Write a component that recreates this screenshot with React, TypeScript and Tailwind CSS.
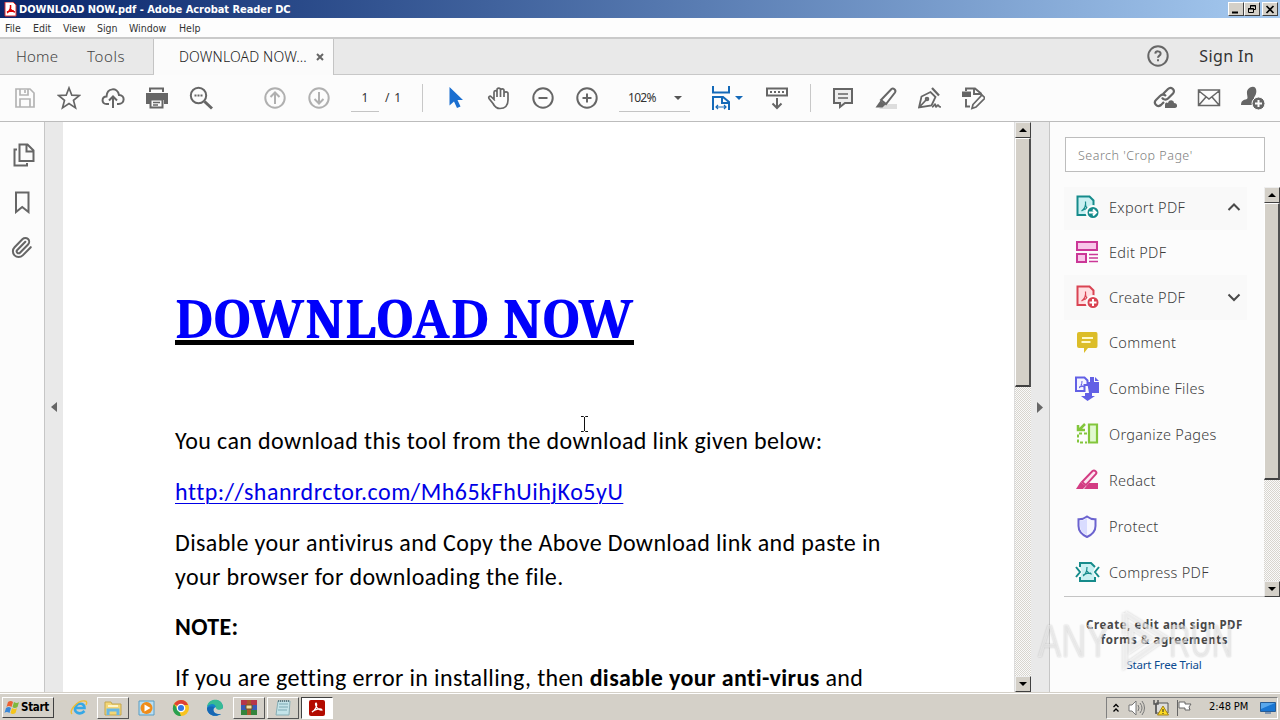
import type { ReactNode } from 'react';
import { Paperclip } from 'lucide-react';

type IconProps = { children: ReactNode; size?: number; className?: string };

function Icon({ children, size = 24, className = '' }: IconProps) {
    return (
        <svg
            width={size}
            height={size}
            viewBox={`0 0 ${size} ${size}`}
            fill="none"
            stroke="currentColor"
            strokeWidth="2"
            className={`shrink-0 ${className}`}
        >
            {children}
        </svg>
    );
}

const PdfMark = () => (
    <path d="M6.5 16c3-2 4.5-6 4-9.500M10.500 9c0 3 2 5 5 5M7 15.500c2-1.500 5-2.200 8-1.700" strokeWidth="1.200" />
);

/* ---------- Title bar ---------- */

function WindowButton({ children }: { children: ReactNode }) {
    return (
        <div className="w-4 h-[14px] bg-[#d4d0c8] border border-t-white border-l-white border-r-[#404040] border-b-[#404040] flex items-center justify-center">
            <svg width="12" height="11" viewBox="0 0 12 11" fill="none" stroke="black" className="shrink-0">
                {children}
            </svg>
        </div>
    );
}

function TitleBar() {
    return (
        <div className="h-[18px] flex items-center bg-linear-to-r from-[#0a246a] to-[#a6caf0] pl-[4px] pr-[2px]">
            <svg width="13" height="15" viewBox="0 0 13 15" className="mr-[2px]">
                <path d="M1 0h8l3 3v11H1z" fill="#fff" stroke="#d33" />
                <path d="M3 11c3-2 4-5 3.500-8M6 6c1 3 2 3 5 4M3 10c2-1 4-1 7-1" fill="none" stroke="#d00" strokeWidth="1.500" />
            </svg>
            <span className="text-white font-bold text-[11px] leading-[16px] pt-px tracking-[-0.050px] font-['DejaVu_Sans_Condensed','DejaVu_Sans',sans-serif] [font-stretch:condensed]">
                DOWNLOAD NOW.pdf - Adobe Acrobat Reader DC
            </span>
            <div className="ml-auto flex">
                <WindowButton><path d="M2 8.500h6" strokeWidth="2" /></WindowButton>
                <WindowButton>
                    <path d="M4.500 4V1.500h5v4H8M4 2h6" />
                    <path d="M2.500 4.500h5v4h-5zM2 5h6" />
                </WindowButton>
                <div className="w-[2px]" />
                <WindowButton><path d="M2.500 2l7 7M9.500 2l-7 7" strokeWidth="1.700" /></WindowButton>
            </div>
        </div>
    );
}

function MenuBar() {
    return (
        <div className="h-[19px] bg-[#fdfdfd] flex items-center gap-[12px] pl-[5px] text-[10.5px] leading-[18px] text-[#333] font-['DejaVu_Sans_Condensed','DejaVu_Sans',sans-serif] [font-stretch:condensed]">
            <span className="w-[17px]">File</span>
            <span className="w-[18px] ml-[-1px]">Edit</span>
            <span className="w-[22px]">View</span>
            <span className="w-[20px]">Sign</span>
            <span className="w-[38px]">Window</span>
            <span>Help</span>
        </div>
    );
}

function TabBar() {
    return (
        <div className="h-[38px] flex bg-[#e9e9e9] border-t-2 border-t-[#cacaca] border-b border-b-[#c8c8c8] text-[15px] text-[#444] font-['Noto_Sans',sans-serif] font-light">
            <div className="w-[154px] flex items-center border-r border-[#c4c4c4] pl-[16px]">
                <span className="w-[71px] tracking-[0.2px]">Home</span>
                <span className="tracking-[0.6px]">Tools</span>
            </div>
            <div className="w-[180px] h-[36px] flex items-center bg-[#fbfbfb] border-r border-[#c4c4c4] pl-[25px] pr-[9px] pb-px text-[14px] text-[#222]">
                <span className="tracking-[0.13px] whitespace-nowrap">DOWNLOAD NOW...</span>
                <svg width="8" height="8" viewBox="0 0 8 8" stroke="#666" strokeWidth="2" className="ml-auto">
                    <path d="M1 1l6 6M7 1L1 7" />
                </svg>
            </div>
            <div className="ml-auto flex items-center pr-[26px] pb-px">
                <Icon className="text-[#666] mr-[29px]">
                    <circle cx="12" cy="12" r="9.700" />
                    <path d="M9.300 9.700c.3-3.200 5.400-3 5.300 0 0 1.900-2.600 1.900-2.600 4" />
                    <path d="M12 15.300v2" />
                </Icon>
                <span className="text-[16px] text-[#333] font-normal tracking-[0.37px]">Sign In</span>
            </div>
        </div>
    );
}

/* ---------- Toolbar ---------- */

function Tool({ children, className = '' }: { children: ReactNode; className?: string }) {
    return <div className={`w-11 flex items-center justify-center ${className}`}><Icon>{children}</Icon></div>;
}

function Toolbar() {
    return (
        <div className="h-[47px] bg-[#fcfcfc] border-b border-[#bcbcbc] flex items-center text-[#666] pl-[3px] pr-[5px] font-['Noto_Sans',sans-serif] text-[12px]">
            <Tool className="text-[#b4b4b4]">
                <path d="M3 3h14l4 4v14H3zM7 3v6h8V3M7 21v-8h10v8M12 4v3" strokeWidth="1.700" />
            </Tool>
            <Tool>
                <path d="M12 2l2.800 7.200 7.700.3-6 4.900 2 7.500-6.500-4.300L5.500 21.900l2-7.500-6-4.900 7.700-.3z" strokeWidth="1.700" />
            </Tool>
            <Tool>
                <path d="M8 18H5.500C0 18 .5 10.500 5.500 10.500 6 1.500 16.500 1 18 9c6.500 0 6 9-.5 9H16" />
                <path d="M12 22V11M8 14.500l4-4 4 4" />
            </Tool>
            <Tool>
                <path d="M5 6V2.500h13V6" />
                <path d="M1 7h22v11h-4v-4H5v4H1z" fill="currentColor" stroke="none" />
                <path d="M5.500 13.500h12v8h-12z" fill="#fcfcfc" />
                <path d="M8 16.500h7M8 19h5" strokeWidth="1.300" />
            </Tool>
            <Tool>
                <circle cx="9.500" cy="9.500" r="7.700" />
                <path d="M15.500 15.500l7.500 7" strokeWidth="3" />
                <path d="M5.500 9.500h2m1 0h2m1 0h2" />
            </Tool>
            <Tool className="ml-[30px] text-[#b0b0b0]">
                <circle cx="12" cy="12" r="9.700" /><path d="M12 18V7M7.500 11L12 6.500l4.500 4.500" />
            </Tool>
            <Tool className="text-[#b0b0b0]">
                <circle cx="12" cy="12" r="9.700" /><path d="M12 6v11M7.500 13l4.500 4.500 4.500-4.500" />
            </Tool>
            <div className="ml-[10px] w-7 h-[27px] border-b border-[#c4c4c4] text-center text-[#333] leading-[26px] mt-[1px]">1</div>
            <span className="ml-[6px] w-[20px] text-[#333] whitespace-pre tracking-[0.800px]">/ 1</span>
            <div className="ml-[17px] w-px h-7 bg-[#c8c8c8]" />
            <Tool className="ml-[11px] text-[#1b6fd0]">
                <path d="M5.500 1v18.500l4.500-4 3 6.500 3.500-1.500-3-6.500h5.500z" fill="currentColor" stroke="none" />
            </Tool>
            <Tool className="ml-[-1px]">
                <path d="M7 14V6.200c0-2.200 3-2.200 3 0V11M10 10V3.700c0-2.200 3.500-2.200 3.500 0V11M13.500 10V4.500c0-2.200 3.500-2.200 3.500 0V11M17 10V7.500c0-2.200 4-2.200 4 0V14c0 6-3 8.500-8 8.500-4 0-5.500-2-7-5L2 12.500c-1-2 1-3 2.500-1.500L8 14.500" strokeWidth="1.700" />
            </Tool>
            <Tool><circle cx="12" cy="12" r="9.700" /><path d="M7.500 12h9" /></Tool>
            <Tool><circle cx="12" cy="12" r="9.700" /><path d="M7.500 12h9M12 7.500v9" /></Tool>
            <div className="ml-[10px] w-[71px] h-[27px] mt-[1px] border-b border-[#c4c4c4] flex items-center pl-[9px] pr-[8px] text-[#333]">
                <span className="tracking-[-0.7px]">102%</span>
                <svg width="8" height="4" viewBox="0 0 8 4" fill="#555" className="ml-auto"><path d="M0 0h8L4 4z" /></svg>
            </div>
            <div className="ml-[19px] flex items-center text-[#1469b8]">
                <Icon>
                    <path d="M4 0v6.500h16V0M4 24V11h10l6 5v8M13 11v6h7" />
                    <path d="M7 21h10M9 19l-2 2 2 2M15 19l2 2-2 2" strokeWidth="1.200" />
                </Icon>
                <svg width="8" height="4" viewBox="0 0 8 4" fill="currentColor" className="ml-[2px]"><path d="M0 0h8L4 4z" /></svg>
            </div>
            <Tool className="ml-[12px]">
                <path d="M2 2.500h20v7H2zM5 6h2m2 0h2m2 0h2m2 0h2" />
                <path d="M12 12v10M7.500 17.500L12 22l4.500-4.500" />
            </Tool>
            <div className="ml-[11px] w-px h-7 bg-[#c8c8c8]" />
            <Tool className="ml-[10px]">
                <path d="M3 3h18v14h-7l-5 4v-4H3z" fill="#eee" />
                <path d="M7 8h10M7 12h10" strokeWidth="1.300" />
            </Tool>
            <Tool className="ml-[-1px]">
                <path d="M9 18h14v5H5z" fill="#ddd" stroke="none" />
                <path d="M7 14L17.500 3c1.700-1.500 5 1 3.500 3.500L12 18z" strokeWidth="2" />
                <path d="M6.500 14.500l5 4-3 3H1.500z" fill="currentColor" stroke="none" />
            </Tool>
            <Tool>
                <path d="M14 2l7 7.500" strokeWidth="2.200" />
                <path d="M1 21.500L3.500 10.500l9-4.500 5 5-4 8.500zL8.500 13.500" strokeWidth="1.800" />
                <circle cx="9" cy="13" r="1.300" />
                <path d="M14 21c2 0 2-3 3-3s0 3 1 3 1-2 2-2 0 2 3 2" strokeWidth="1.700" />
            </Tool>
            <Tool className="ml-[-1px]">
                <path d="M5 5V2.500h9l6 5v2M13 2v6h6M5 13v7.500h4" strokeWidth="1.900" />
                <path d="M1 5.500h9V11H1z" fill="currentColor" stroke="none" />
                <path d="M12 18.500L21 9l3 3-9 9-4 1.500z" strokeWidth="1.700" />
            </Tool>
            <div className="flex-1" />
            <Tool>
                <path d="M10 8l5-5c3-3 8 1 5 4.500l-5 5c-2 2-5 1-6-1M13 10c-2-2-4-2-6 0l-4 4c-3 3 1 8 5 5l3-3" strokeWidth="2.200" />
                <path d="M12 22v-3c0-3 2-3 3-2 1-4 6-3 6 0 4 0 4 5 1 5z" fill="currentColor" stroke="none" />
            </Tool>
            <Tool>
                <path d="M1.500 4h21v15.500h-21zM2 5l10 8 10-8M2 19l7-8M22 19l-7-8" strokeWidth="1.500" />
            </Tool>
            <Tool>
                <path d="M9 1.500c7-3 8 5 4 10 0 2 1 2 3 3l-2 4.500H0c0-4 2-5 6-6 2-2-3-8 3-11.500z" fill="currentColor" stroke="none" />
                <circle cx="17.500" cy="17.500" r="6.500" fill="currentColor" stroke="#fcfcfc" strokeWidth="1" />
                <path d="M17.500 14v7M14 17.500h7" stroke="#fcfcfc" />
            </Tool>
        </div>
    );
}

/* ---------- Document area ---------- */

function NavPane() {
    return (
        <div className="w-[45px] bg-[#fcfcfc] border-r border-[#c6c6c6] flex flex-col items-center pt-[21px] gap-[23px] text-[#666]">
            <Icon className="ml-[3px]">
                <path d="M7.500 1.500h8l6 6v10.500h-14zM14.500 2v6.500h6.500M5 6.500H2.500v16H15V20" />
            </Icon>
            <Icon><path d="M6 2.500h12.500v19.500l-6.300-5L6 22z" /></Icon>
            <Paperclip size={23} strokeWidth={2.1} className="mt-[-1px] ml-[-2px]" />
        </div>
    );
}

function ScrollArrow({ up = false }: { up?: boolean }) {
    return (
        <div className="w-full h-4 shrink-0 bg-[#d4d0c8] border border-t-[#eee] border-l-[#eee] border-r-[#404040] border-b-[#404040] flex items-center justify-center">
            <svg width="8" height="4" viewBox="0 0 8 4" fill="#000" className="mr-px">
                <path d={up ? 'M0 4h8L4 0z' : 'M0 0h8L4 4z'} />
            </svg>
        </div>
    );
}

const trackBg = 'bg-[#eae8e3] bg-[repeating-conic-gradient(#d8d5ce_0_25%,#fafafa_0_50%)] bg-[length:2px_2px]';

function PageText() {
    return (
        <div className="flex-1 bg-white overflow-hidden pl-[112px] text-black font-['Carlito','Lato',sans-serif] text-[24px] leading-[34px] tracking-[0.37px] whitespace-nowrap">
            <h1 className="mt-[167px] h-[56px] w-[459px] border-b-[5px] border-black text-[#0000fb] font-bold text-[57px] leading-[62px] tracking-[0.9px] font-['Cambria','Caladea','Liberation_Serif',serif]">
                DOWNLOAD NOW
            </h1>
            <p className="mt-[79px]">You can download this tool from the download link given below:</p>
            <p className="mt-[17px] text-[#0000e6] tracking-[0.52px]"><span className="underline decoration-1 underline-offset-[3px]">http://shanrdrctor.com/Mh65kFhUihjKo5yU</span></p>
            <p className="mt-[17px]">
                Disable your antivirus and Copy the Above Download link and paste in<br />
                your browser for downloading the file.
            </p>
            <p className="mt-[16px] font-bold">NOTE:</p>
            <p className="mt-[17px]">If you are getting error in installing, then <b>disable your anti-virus</b> and</p>
        </div>
    );
}

function DocumentArea() {
    return (
        <div className="flex-1 flex relative min-w-0">
            <div className="w-[18px] bg-[#e9e9e9] flex items-center justify-center">
                <svg width="6" height="10" viewBox="0 0 6 10" fill="#666"><path d="M6 0v10L0 5z" /></svg>
            </div>
            <PageText />
            <div className={`w-[17px] flex flex-col border-l border-[#ddd] ${trackBg}`}>
                <ScrollArrow up />
                <div className="h-[249px] bg-[#d4d0c8] border border-t-white border-l-white border-r-2 border-r-[#505050] border-b-2 border-b-[#404040]" />
                <div className="flex-1" />
                <ScrollArrow />
            </div>
            <div className="w-[18px] bg-[#e9e9e9] flex items-center justify-center">
                <svg width="6" height="11" viewBox="0 0 6 11" fill="#666"><path d="M0 0v11l6-5.500z" /></svg>
            </div>
            {/* Text cursor */}
            <svg width="9" height="16" viewBox="0 0 9 16" fill="none" stroke="#111" className="absolute left-[535px] top-[294px]">
                <path d="M1 .5h2.500l1 1 1-1H8M4.500 1v14M1 15.500h2.500l1-1 1 1H8" />
            </svg>
        </div>
    );
}

/* ---------- Tools pane ---------- */

const tools = [
    {
        label: 'Export PDF', chevron: 'M1.500 7L7 1.500 12.500 7', shaded: true,
        icon: (
            <g stroke="#168b8b">
                <path d="M2.500 1.500h12l4 4V20h-16z" fill="#c9f0f2" /><PdfMark />
                <circle cx="18" cy="17.500" r="6.500" fill="#168b8b" stroke="#fbfbfb" />
                <path d="M14 17.500h6M18 14.500l3 3-3 3" stroke="white" />
            </g>
        ),
    },
    {
        label: 'Edit PDF',
        icon: (
            <g stroke="#cb3797">
                <path d="M2 2h20v8H2zM2 14h9v8H2z" fill="#f9c6e9" />
                <path d="M14 14.500h9M14 18h9M14 21.500h9" strokeWidth="1.400" />
            </g>
        ),
    },
    {
        label: 'Create PDF', chevron: 'M1.500 1.500L7 7l5.500-5.500', shaded: true,
        icon: (
            <g stroke="#d94453">
                <path d="M2.500 1.500h12l4 4V20h-16z" fill="#ffdfe2" /><PdfMark />
                <circle cx="18" cy="17.500" r="6.500" fill="#d94453" stroke="#fbfbfb" />
                <path d="M14.500 17.500h7M18 14v7" stroke="white" />
            </g>
        ),
    },
    {
        label: 'Comment',
        icon: (
            <g>
                <path d="M4 2h17q1.500 0 1.500 2v12q0 2-1.500 2H13l-4 5v-5H4q-2 0-2-2V4q0-2 2-2z" fill="#dcbd29" stroke="none" />
                <path d="M7 8h11M6.500 12h9" stroke="#fff9c9" />
            </g>
        ),
    },
    {
        label: 'Combine Files',
        icon: (
            <g stroke="#6260e5">
                <path d="M12 6h3V1h4v5h5v11h-7v3h3l-7.500 5L6 20h4v-3h4z" fill="#6260e5" stroke="none" />
                <path d="M1 1.500h8.500l3 3V9h-3v6H1z" fill="#f5f5ff" />
                <path d="M4 12c2-1 3-4 3-7M6 8c1 2 2 3 4 3M4 11l6-1" strokeWidth="1" />
                <path d="M20 1l4 4h-4z" fill="#6260e5" stroke="none" />
            </g>
        ),
    },
    {
        label: 'Organize Pages',
        icon: (
            <g stroke="#83c63c">
                <path d="M14 2.500h8v18h-8z" fill="#e1f9d0" strokeWidth="2.200" />
                <path d="M12 11.500H3v9h9" strokeDasharray="3 2" />
                <path d="M10 2L4 8M3 3v5h7" strokeWidth="2.500" />
            </g>
        ),
    },
    {
        label: 'Redact',
        icon: (
            <g stroke="#d33c83">
                <path d="M14 15h9v6H9z" fill="#d33c83" stroke="none" />
                <path d="M7 14L17.500 3c2-1.500 5 1 3.500 3L11 17z" fill="#fde4f0" strokeWidth="1.900" />
                <path d="M5.500 14l5.500 4-3 3H1z" fill="#d33c83" stroke="none" />
            </g>
        ),
    },
    {
        label: 'Protect',
        icon: (
            <g stroke="#6b63cf">
                <path d="M12 2.500q4 3 8.500 2.800V12q0 7-8.500 11-8.500-4-8.500-11V5.300Q8 5.500 12 2.500z" fill="#f6f6ff" />
                <path d="M12 4v17q-7-3-7-9V7q4 0 7-3z" fill="#d9dcff" stroke="none" />
            </g>
        ),
    },
    {
        label: 'Compress PDF',
        icon: (
            <g stroke="#168b8b">
                <path d="M5 3h11l4 4-2 5 2 5v4H5v-4l2-5-2-5z" fill="#c9f0f2" stroke="none" />
                <path d="M5 7V3h11l4 4M5 17v4h15v-4M1 7l4 5-4 5M24 7l-4 5 4 5" />
                <path d="M8 16c3-2 4-5 4-9M12 11c1 2 2 3 5 3M8 15c2-1 5-2 8-2" strokeWidth="1.200" />
            </g>
        ),
    },
];

function ToolsPane() {
    return (
        <div className="w-[231px] shrink-0 bg-[#fcfcfc] border-l border-[#c6c6c6] flex flex-col relative font-['Noto_Sans',sans-serif]">
            <div className="ml-[15px] mt-[15px] w-[200px] h-[35px] bg-white border border-[#bdbdbd] pl-[12px] text-[12.5px] leading-[35px] tracking-[0.5px] text-[#808080] font-light">
                Search 'Crop Page'
            </div>
            <div className="mt-[15px] h-[410px] flex">
                <div className="flex-1 ml-[14px] overflow-hidden border-b border-[#c4c4c4]">
                    {tools.map((tool, i) => (
                        <div
                            key={tool.label}
                            className={`${i < 4 ? 'h-[45px]' : 'h-[46px]'} ${i === 0 ? 'mt-[-2px]' : ''} ${i > 3 ? 'pt-px' : ''} w-[183px] flex items-center pl-[11px] pr-[6px] ${tool.shaded ? 'bg-[#f9f9f9]' : ''}`}
                        >
                            <Icon size={25}>{tool.icon}</Icon>
                            <span className="ml-[9px] text-[14.5px] font-light text-[#3c3c3c] tracking-[0.3px] whitespace-nowrap">{tool.label}</span>
                            {tool.chevron && (
                                <svg width="14" height="9" viewBox="0 0 14 9" fill="none" stroke="#4a4a4a" strokeWidth="2" className="ml-auto">
                                    <path d={tool.chevron} />
                                </svg>
                            )}
                        </div>
                    ))}
                </div>
                <div className={`w-4 flex flex-col ${trackBg}`}>
                    <ScrollArrow up />
                    <div className="h-[277px] bg-[#d4d0c8] border border-t-white border-l-white border-r-2 border-r-[#505050] border-b-2 border-b-[#404040]" />
                    <div className="flex-1" />
                    <ScrollArrow />
                </div>
            </div>
            <div className="text-center mt-[20px] text-[11.5px] leading-[15px] tracking-[0.55px] font-bold text-[#484848] pr-px">
                Create, edit and sign PDF<br />forms &amp; agreements
                <div className="mt-[10px] pr-px font-normal text-[#0c4b90] tracking-[-0.2px]">Start Free Trial</div>
            </div>

            {/* Watermark */}
            <div className="absolute left-[-12px] top-[486px] w-[196px] h-[64px] flex items-center text-[47px] leading-none text-white/55 font-['Liberation_Sans',sans-serif] [text-shadow:0_0_2px_rgba(0,0,0,0.22)]">
                <span className="w-[73px] origin-left scale-x-[0.74]">ANY</span>
                <svg width="58" height="62" viewBox="0 0 58 62" fill="none" stroke="#fff" strokeOpacity=".6" strokeWidth="5" className="shrink-0 drop-shadow-[0_0_1px_rgba(0,0,0,0.3)]">
                    <path d="M14 4l40 25-40 28V34M14 4v22M20 18l18 11-18 12z" />
                </svg>
                <span className="w-[65px] origin-left scale-x-[0.63]">RUN</span>
            </div>
        </div>
    );
}

/* ---------- Taskbar ---------- */

function TaskItem({ children, open = false, active = false }: { children: ReactNode; open?: boolean; active?: boolean }) {
    return (
        <div className={`w-8 h-[22px] mr-[2px] flex items-center justify-center border ${active
            ? 'bg-white border-t-[#404040] border-l-[#404040] border-r-white border-b-white'
            : open
                ? 'border-t-white border-l-white border-r-[#555] border-b-[#555]'
                : 'border-transparent'}`}
        >
            <svg width="18" height="18" viewBox="0 0 18 18" fill="none" className="shrink-0">{children}</svg>
        </div>
    );
}

function Taskbar() {
    return (
        <div className="h-7 bg-[#d4d0c8] border-t border-[#d4d0c8] shadow-[inset_0_1px_0_#fff] flex items-center pl-[2px] pr-[2px] pt-[2px] font-['DejaVu_Sans_Condensed','DejaVu_Sans',sans-serif] [font-stretch:condensed]">
            <div className="w-[52px] h-[21px] mr-[9px] flex items-center border border-t-white border-l-white border-r-[#404040] border-b-[#404040] pl-[1px]">
                <svg width="17" height="17" viewBox="0 0 17 17" className="shrink-0">
                    <path d="M4 3q3-2 5 0L7.500 8q-3-2-5 0z" fill="#ed6132" />
                    <path d="M10 3q3 2 5 0l-1.500 5q-3 2-5 0z" fill="#7fb83c" />
                    <path d="M2 9q3-2 5 0l-1.500 5q-3-2-5 0z" fill="#3987d8" />
                    <path d="M8 9q3 2 5 0l-1.500 5q-3 2-5 0z" fill="#f5c51b" />
                </svg>
                <span className="text-[11.5px] font-bold tracking-[-0.300px]">Start</span>
            </div>
            <TaskItem>
                <path d="M14.500 12c-5 5-11 1-9-4 2-5 9-4 9 1h-9" stroke="#36a8e6" strokeWidth="2.600" />
                <path d="M2 15c-3-3 5-14 13-13 2 0 2 2 1 4" stroke="#efbd35" strokeWidth="1.400" />
            </TaskItem>
            <TaskItem open>
                <path d="M1 3h6l1 2h9v11H1z" fill="#f3d676" stroke="#c5a64d" />
                <path d="M4 16v-5h10v5" stroke="#69b7e5" strokeWidth="3" /><path d="M4 7h10" stroke="#fff5c8" strokeWidth="2" />
            </TaskItem>
            <TaskItem>
                <path d="M1 2h15v14H1z" fill="#b9def3" stroke="#599dc3" /><circle cx="8.500" cy="9" r="6" fill="#ef8c19" />
                <path d="M6.500 5.500v7l6-3.500z" fill="white" />
            </TaskItem>
            <TaskItem>
                <circle cx="9" cy="9" r="8" fill="#f9c31f" />
                <path d="M9 9L2 5c4-6 12-5 14 1H9z" fill="#df4035" />
                <path d="M2 5l5 7 2 5C2 17-1 10 2 5z" fill="#28a050" />
                <circle cx="9" cy="9" r="3.700" fill="#3478e5" stroke="white" strokeWidth="1.300" />
            </TaskItem>
            <TaskItem>
                <path d="M17 8C16-2 2-1 1 9c0 7 8 10 14 6-8 1-10-5-5-7 1 3 7 3 7 0z" fill="#1684cc" />
                <path d="M17 8C16-2 2-1 1 8c4-5 9-3 9 1 1 3 7 2 7-1z" fill="#37bb94" />
                <path d="M1 9c0 7 8 10 14 6-6 1-9-3-7-7-3-1-6 0-7 1z" fill="#1767b4" />
            </TaskItem>
            <TaskItem open>
                <path d="M1 1h16v5H1z" fill="#b6364a" /><path d="M1 6h16v5H1z" fill="#385bb7" /><path d="M1 11h16v5H1z" fill="#33843d" />
                <path d="M9 1v15" stroke="#a9572c" strokeWidth="4" /><path d="M6 6h6v4H6z" fill="#f2dea5" stroke="#71551c" />
            </TaskItem>
            <TaskItem open>
                <path d="M4 2h12l-1 14H2z" fill="#c4e4e9" stroke="#87aeb5" />
                <path d="M5 5h9M5 8h9M4 11h9" stroke="#7caab4" /><path d="M4 2h12" stroke="#617c83" strokeWidth="2" strokeDasharray="1 1" />
            </TaskItem>
            <TaskItem active>
                <rect x="1" y="1" width="16" height="16" rx="2" fill="#b30b00" />
                <path d="M4 13c3-1 6-7 4-9-2 1 2 8 6 7-1-2-7-1-10 2z" stroke="white" strokeWidth="1.200" />
            </TaskItem>

            <div className="ml-auto w-[172px] h-[22px] border border-t-[#808080] border-l-[#808080] border-r-white border-b-white flex items-center pl-[5px] text-[11px] text-black">
                <svg width="8" height="10" viewBox="0 0 8 10" fill="none" stroke="#000" strokeWidth="1.300" className="shrink-0"><path d="M1.500 4L4 1.500 6.500 4M1.500 8.500L4 6l2.500 2.500" /></svg>
                <svg width="17" height="16" viewBox="0 0 17 16" fill="none" stroke="#777" className="ml-[8px] shrink-0">
                    <path d="M1 5h3l4-4v14l-4-4H1z" fill="#fff" /><path d="M10 5q2 3 0 6M12 3q4 5 0 10M14 1q5 7 0 14" />
                </svg>
                <svg width="17" height="17" viewBox="0 0 17 17" fill="none" className="ml-[7px] shrink-0">
                    <path d="M4 4h12v10H4z" fill="#ddd" stroke="#555" /><path d="M2 1v4h4V1M4 5v10" stroke="#555" strokeWidth="1.500" />
                    <path d="M11 7l5.500 9h-11z" fill="#fdda22" stroke="#a58317" /><path d="M11 10v3m0 1v1" stroke="#222" />
                </svg>
                <svg width="16" height="16" viewBox="0 0 16 16" fill="#fff" stroke="#666" className="ml-[7px] shrink-0"><path d="M1.500 0v16M3 2h6v2h6l-2 3 1 3H9V8H3z" /></svg>
                <span className="ml-[17px] whitespace-nowrap tracking-[-0.1px]">2:48 PM</span>
                <svg width="16" height="14" viewBox="0 0 16 14" className="ml-auto mr-[1px] shrink-0">
                    <path d="M.5 1.500h15v9H.5z" fill="#1a76d2" stroke="#285c94" /><path d="M1 2h14L1 8z" fill="#58a7ec" /><path d="M5 11h6v2H5z" fill="#8197b3" />
                </svg>
            </div>
        </div>
    );
}

export default function App() {
    return (
        <div className="w-[1280px] h-[720px] overflow-hidden flex flex-col bg-white">
            <TitleBar />
            <MenuBar />
            <TabBar />
            <Toolbar />
            <div className="h-[570px] flex">
                <NavPane />
                <DocumentArea />
                <ToolsPane />
            </div>
            <Taskbar />
        </div>
    );
}
